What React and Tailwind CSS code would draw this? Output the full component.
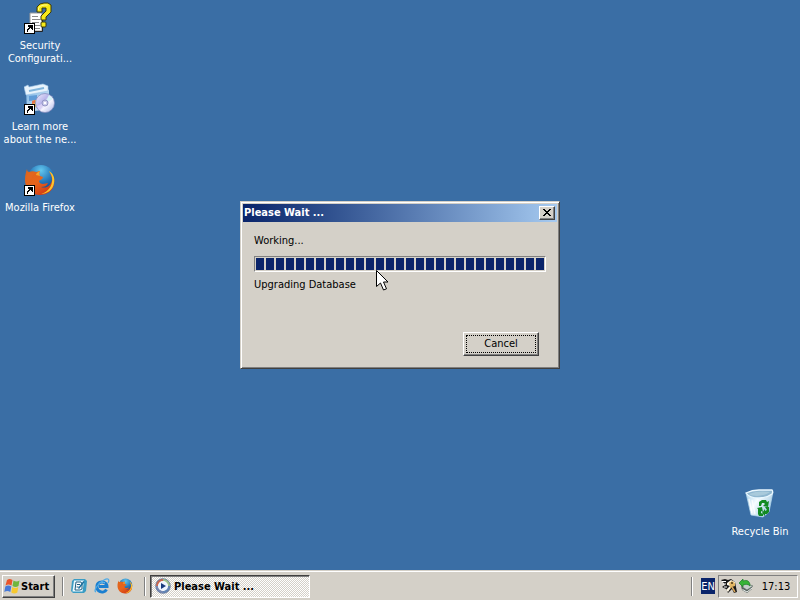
import React from "react";

const RAISED =
  "border border-t-white border-l-white border-r-[#404040] border-b-[#404040] bg-[#d4d0c8] shadow-[inset_-1px_-1px_0_#808080]";

function ShortcutArrow() {
  return (
    <g shapeRendering="crispEdges">
      <rect x="0" y="21" width="11" height="11" fill="#000" />
      <rect x="1" y="22" width="9" height="9" fill="#fff" />
      <path d="M4 23h5v5h-1v-1h-1v-1h-1v1h-1v1h-1v2h-1v-3h1v-1h1v-1h-1z" fill="#000" />
    </g>
  );
}

function SecurityIcon() {
  return (
    <svg width="32" height="32" viewBox="0 0 32 32" aria-hidden="true">
      <path d="M6 11h12v18H6z" fill="#fff" stroke="#9a9a9a" />
      <path d="M18.500 12v17.500H10" fill="none" stroke="#222" />
      <path d="M8 14.500h6M8 17.500h8M8 20.500h7M8 23.500h8M10 26.500h6" stroke="#8b8b8b" />
      <path
        d="M13 10V5l3-3 4-1h4l3 2v7l-3 3-2 2v3h-5v-4l3-3 2-2V6h-4v4z"
        fill="#f7ea18"
        stroke="#3b3909"
        strokeLinejoin="round"
      />
      <path d="M14.500 8V6l2-2 4-1h3" stroke="#fffa90" fill="none" />
      <rect x="17" y="20" width="5" height="5" rx="1" fill="#f7ea18" stroke="#3b3909" />
      <ShortcutArrow />
    </svg>
  );
}

function LearnIcon() {
  return (
    <svg width="32" height="32" viewBox="0 0 32 32" aria-hidden="true">
      <defs>
        <linearGradient id="boxFace" x1="0" y1="0" x2="1" y2="1">
          <stop offset="0" stopColor="#72aee2" />
          <stop offset="1" stopColor="#e9f5fd" />
        </linearGradient>
        <linearGradient id="disc" x1="0" y1="0" x2="1" y2="1">
          <stop offset="0" stopColor="#f3f1ff" />
          <stop offset=".4" stopColor="#b9b5ea" />
          <stop offset=".6" stopColor="#f6f4ff" />
          <stop offset="1" stopColor="#a7b3e4" />
        </linearGradient>
      </defs>
      <path d="M2 6l18-2 5 3v19L3 29z" fill="url(#boxFace)" />
      <path d="M0 4l4-2 1 2 14-3 5 2v5L2 12z" fill="#e7f3fc" stroke="#a2c8e8" strokeWidth=".6" />
      <path d="M5 8l15-3" stroke="#81b5dc" strokeWidth="2" />
      <path d="M5 13l8-1v5l-8 1z" fill="#5f9bd7" />
      <path d="M8 18l4-1v7l-4 1z" fill="#eec64a" />
      <path d="M8 18l3-1v3l-3 1z" fill="#e5744c" />
      <circle cx="21" cy="20" r="9.5" fill="url(#disc)" stroke="#7f86b9" strokeWidth=".7" />
      <path d="M21 20l4-8a9 9 0 0 1 4 4z" fill="#d5f1f7" />
      <path d="M21 20l-5 7a9 9 0 0 1-3-4z" fill="#d9d0f4" />
      <circle cx="21" cy="20" r="3" fill="#cac9eb" stroke="#9396c5" />
      <circle cx="21" cy="20" r="1.3" fill="#fff" />
      <ShortcutArrow />
    </svg>
  );
}

function FirefoxArt({ id }) {
  return (
    <>
      <defs>
        <radialGradient id={`${id}globe`} cx=".5" cy=".2" r=".8">
          <stop offset="0" stopColor="#63c7ee" />
          <stop offset=".55" stopColor="#2475b8" />
          <stop offset="1" stopColor="#173c7d" />
        </radialGradient>
        <linearGradient id={`${id}fox`} x1=".1" y1="0" x2=".8" y2="1">
          <stop offset="0" stopColor="#dc651c" />
          <stop offset=".5" stopColor="#e8641b" />
          <stop offset="1" stopColor="#ce3313" />
        </linearGradient>
      </defs>
      <circle cx="17" cy="14.5" r="13.5" fill={`url(#${id}globe)`} />
      <path
        d="M3 5c0 2 1 3 2 3 2-1 5-1 7 0l4-1c-1 2-1 3 0 5l3 1c0 2-3 3-4 4 0 2 2 3 4 3 2 0 3-1 5-1-1 3-4 4-7 4 5 2 10-1 11-7 0-3-1-6-3-8 5 3 6 8 5 12-1 7-7 11-14 11C8 31 1 25 1 16c0-5 1-8 2-11z"
        fill={`url(#${id}fox)`}
      />
      <path
        d="M25 7c5 3 6 8 5 12-1 7-7 11-13 11 6-2 10-6 11-12 1-5-1-8-3-11z"
        fill="#fbc52d"
      />
      <path d="M4 9c2 0 5-1 8 0-3 1-4 3-4 5-1 2-3 3-5 5 0-4 0-7 1-10z" fill="#e2661f" />
      <path d="M16 7c-1 2-1 3 0 5l-4-1c0-2 2-3 4-4z" fill="#f7a329" />
    </>
  );
}

function FirefoxIcon() {
  return (
    <svg width="32" height="32" viewBox="0 0 32 32" aria-hidden="true">
      <FirefoxArt id="desktop" />
      <ShortcutArrow />
    </svg>
  );
}

function RecycleIcon() {
  return (
    <svg width="32" height="32" viewBox="0 0 32 32" aria-hidden="true">
      <defs>
        <linearGradient id="bin" x1="0" y1="0" x2="1" y2=".6">
          <stop offset="0" stopColor="#a9d3ec" />
          <stop offset=".45" stopColor="#f6fcff" />
          <stop offset="1" stopColor="#9fc9e2" />
        </linearGradient>
      </defs>
      <path d="M2 5l13 5 14-6-4 20-6 5-12-2z" fill="url(#bin)" stroke="#b4d9ed" strokeWidth=".7" />
      <path d="M2 5c4-2 8-3 13-3l13 0c1 1 1 2 0 4-4 3-8 4-13 4-6 0-11-2-13-5z" fill="#8fb7d0" stroke="#eaf8ff" strokeWidth="1.3" />
      <path d="M5 6c7-3 14-3 21-2-4 3-14 6-21 2z" fill="#a9cadb" />
      <path d="M5 11l3 14M8 12l3 14" stroke="#fff" strokeWidth="1.3" opacity=".8" />
      <g fill="#128a22">
        <path d="M15 18v-4l3-2h4l1 2 2-1-1 6-5-1 2-2-1-1h-2l-1 3z" />
        <path d="M21 19l4 0v5l-2 2h-2v2l-3-3 3-4v2l2-1z" />
        <path d="M13 20l5-1 1 5-2-1v2l2 1v2h-4l-1-2v-5z" />
      </g>
    </svg>
  );
}

function DesktopIcon({ icon, lines }) {
  return (
    <button type="button" className="flex h-[81px] w-20 flex-col items-center gap-[5px] text-white">
      {icon}
      <span className="whitespace-nowrap text-center leading-[13px]">
        {lines.map((line) => (
          <span key={line} className="block">
            {line}
          </span>
        ))}
      </span>
    </button>
  );
}

function Dialog() {
  return (
    <section
      role="dialog"
      aria-labelledby="dialog-title"
      className="w-80 border border-t-[#d4d0c8] border-l-[#d4d0c8] border-r-[#404040] border-b-[#404040] bg-[#d4d0c8] shadow-[inset_1px_1px_0_#fff,inset_-1px_-1px_0_#808080]"
    >
      <div className="p-[2px]">
        <header className="flex h-[18px] items-center justify-between bg-linear-to-r from-[#0a246a] to-[#a6caf0] pr-[2px] pl-px text-white">
          <h1 id="dialog-title" className="font-bold">
            Please Wait ...
          </h1>
          <button
            type="button"
            aria-label="Close"
            className={`flex h-[14px] w-4 items-center justify-center text-black ${RAISED}`}
          >
            <svg width="8" height="7" viewBox="0 0 8 7" shapeRendering="crispEdges" aria-hidden="true">
              <path
                d="M0 0h2v1h1v1h2V1h1V0h2v1H7v1H6v1H5v1h1v1h1v1h1v1H6V6H5V5H3v1H2v1H0V6h1V5h1V4h1V3H2V2H1V1H0z"
                fill="currentColor"
              />
            </svg>
          </button>
        </header>
        <div className="flex flex-col px-[11px] pt-3 pb-[10px]">
          <p id="progress-label" className="leading-[14px]">
            Working...
          </p>
          <div
            role="progressbar"
            aria-labelledby="progress-label"
            aria-valuenow={100}
            className="mt-2 flex h-4 gap-[2px] border border-t-[#808080] border-l-[#808080] border-r-white border-b-white p-px"
          >
            {Array.from({ length: 29 }, (_, i) => (
              <span key={i} className="flex-1 bg-[#0a246a]" />
            ))}
          </div>
          <p className="mt-[6px] leading-[14px]">Upgrading Database</p>
          <button
            type="button"
            className={`mt-10 mr-[7px] h-6 w-[76px] self-end p-[2px] ${RAISED}`}
          >
            <span className="flex h-full items-center justify-center border border-dotted border-black">
              Cancel
            </span>
          </button>
        </div>
      </div>
    </section>
  );
}

function Cursor() {
  return (
    <svg
      className="absolute top-[270px] left-[376px]"
      width="13"
      height="22"
      viewBox="0 0 13 22"
      aria-hidden="true"
    >
      <path d="M.5.5v16l4-3.5 3 7 3-1.200-3-6.800h4.500z" fill="#fff" stroke="#000" />
    </svg>
  );
}

function WindowsFlag() {
  return (
    <svg width="16" height="16" viewBox="0 0 16 16" aria-hidden="true">
      <path d="M3 2c2-1.500 3-1.500 5.500 0L7.500 7.500C5 6 4 6 1.500 7.500z" fill="#e9552b" />
      <path d="M9.500 2.500c2 1.300 4 1.300 6 0l-1 5.500c-2 1.300-4 1.300-6 0z" fill="#6fb63d" />
      <path d="M1.300 8.500c2-1.500 4-1.500 6 0l-1 5.500c-2-1.500-4-1.500-6 0z" fill="#4679d8" />
      <path d="M8.300 9c2 1.300 4 1.300 6 0l-1 5.500c-2 1.300-4 1.300-6 0z" fill="#f7c92f" />
    </svg>
  );
}

function ShowDesktopIcon() {
  return (
    <svg width="16" height="16" viewBox="0 0 16 16" aria-hidden="true">
      <path d="M3 1h11l2 2-1 10-2 2H2l-2-2L1 3z" fill="#3a9cc4" />
      <path d="M3 2.500h10l-1.500 11H1.500z" fill="#eaf8fd" />
      <path d="M5 4h5l1 2v5l-2 1H4z" fill="#fff" stroke="#1d5d80" />
      <path d="M6 6.500h3M5.500 9h2" stroke="#1d5d80" />
      <path d="M7.500 10.500l5.500-7" stroke="#1b6f9d" strokeWidth="1.500" />
    </svg>
  );
}

function ExplorerIcon() {
  return (
    <svg width="16" height="16" viewBox="0 0 16 16" aria-hidden="true">
      <path
        d="M12.500 11.500C11 14 8 14.500 6 13.500 2 12 2 6 5.500 4.500 9 3 13 5 13 8.500H5"
        fill="none"
        stroke="#1b7fd0"
        strokeWidth="3"
      />
      <path d="M4.500 6C6 4 9 3.500 11 5" fill="none" stroke="#79c9f5" />
      <path d="M2 14c-3-1 2-9 8-12 4-2 6-1 4 3" fill="none" stroke="#4fabe6" strokeWidth="1.300" />
    </svg>
  );
}

function TaskIcon() {
  return (
    <svg width="16" height="16" viewBox="0 0 16 16" aria-hidden="true">
      <circle cx="8" cy="8" r="7" fill="#fff" stroke="#6c7c9d" strokeWidth="1.500" />
      <g fill="none" strokeWidth="2">
        <path d="M8 2a6 6 0 0 0-6 6" stroke="#ca674e" />
        <path d="M8 2a6 6 0 0 1 6 6" stroke="#9dc18c" />
        <path d="M14 8a6 6 0 0 1-6 6" stroke="#6285b5" />
        <path d="M2 8a6 6 0 0 0 6 6" stroke="#7487b3" />
      </g>
      <circle cx="8" cy="8" r="4.500" fill="#eef5ff" />
      <path d="M6 5l5 3-5 3z" fill="#193b7d" />
    </svg>
  );
}

function KeysIcon() {
  return (
    <svg width="16" height="16" viewBox="0 0 16 16" aria-hidden="true">
      <path d="M0 2l4-1 3 1 3-1 4 3 2 10-3 1-2-4-4 4-2-4-4-2 3-2-2-3z" fill="#171717" />
      <path d="M1 3.500h4M2 6h3M3 9h3" stroke="#fff" strokeWidth="1.200" />
      <path d="M6 5l4-3 4 2v3l-3 1-4 6-2-2 4-4-3-1z" fill="#fdf6e4" />
      <path d="M8 5l3-2 3 2v3l-3 1-2 2v-3z" fill="#e2b765" />
      <path d="M11 9l3 5" stroke="#d9a75c" strokeWidth="1.500" />
      <circle cx="11" cy="5" r="1" fill="#4a3516" />
    </svg>
  );
}

function HardwareIcon() {
  return (
    <svg width="16" height="16" viewBox="0 0 16 16" aria-hidden="true">
      <path d="M3 8l6 3 5-3v3l-5 4-5-3z" fill="#59645f" />
      <path d="M3 8l4-3 8 3-6 4z" fill="#c5ceca" stroke="#59645f" strokeWidth=".6" />
      <path d="M4.500 11.500l4.500 2.500 5-4" stroke="#eef2f0" fill="none" />
      <path d="M1 5l4-4v2c4-1.500 7 0 7 5-2-2-4-2-7-1v2z" fill="#36b436" stroke="#187a24" strokeWidth=".7" />
    </svg>
  );
}

function Divider() {
  return <span className="h-[19px] w-[2px] border-l border-[#808080] bg-white" />;
}

function Taskbar() {
  return (
    <footer className="flex h-[30px] items-center border-t border-[#d4d0c8] bg-[#d4d0c8] px-[2px] pt-px shadow-[inset_0_1px_0_#fff]">
      <button
        type="button"
        className={`flex h-[23px] w-[53px] shrink-0 items-center gap-px pl-px font-bold ${RAISED}`}
      >
        <WindowsFlag />
        Start
      </button>
      <nav aria-label="Quick launch" className="flex items-center pl-[7px]">
        <Divider />
        <div className="flex items-center gap-[7px] pl-[7px]">
          <button type="button" aria-label="Show desktop">
            <ShowDesktopIcon />
          </button>
          <button type="button" aria-label="Internet Explorer">
            <ExplorerIcon />
          </button>
          <button type="button" aria-label="Firefox">
            <svg width="16" height="16" viewBox="0 0 32 32" aria-hidden="true">
              <FirefoxArt id="launch" />
            </svg>
          </button>
        </div>
      </nav>
      <div className="flex flex-1 items-center gap-1 pl-[11px]">
        <Divider />
        <button
          type="button"
          className="flex h-[23px] w-40 items-center gap-[3px] border border-t-[#404040] border-l-[#404040] border-r-white border-b-white bg-[repeating-conic-gradient(#fff_0_25%,#d4d0c8_0_50%)] bg-size-[2px_2px] pl-1 font-bold shadow-[inset_1px_1px_0_#808080]"
        >
          <TaskIcon />
          Please Wait ...
        </button>
      </div>
      <Divider />
      <span className="mr-[3px] ml-2 flex h-4 w-[14px] items-center justify-center overflow-hidden bg-[#0a246a] text-white">
        EN
      </span>
      <div className="flex h-[23px] w-20 items-center gap-px border border-t-[#808080] border-l-[#808080] border-r-white border-b-white pl-[2px]">
        <KeysIcon />
        <HardwareIcon />
        <time className="flex-1 text-center">17:13</time>
      </div>
    </footer>
  );
}

export default function App() {
  return (
    <div className="flex min-h-screen flex-col overflow-hidden bg-[#3a6ea5] font-['DejaVu_Sans_Condensed','DejaVu_Sans',sans-serif] text-[11px] leading-[13px] text-black">
      <main className="relative flex flex-1 items-center justify-between pb-px">
        <div className="flex flex-col self-stretch pt-[2px]">
          <DesktopIcon icon={<SecurityIcon />} lines={["Security", "Configurati..."]} />
          <DesktopIcon icon={<LearnIcon />} lines={["Learn more", "about the ne..."]} />
          <DesktopIcon icon={<FirefoxIcon />} lines={["Mozilla Firefox"]} />
        </div>
        <Dialog />
        <div className="flex flex-col self-end">
          <DesktopIcon icon={<RecycleIcon />} lines={["Recycle Bin"]} />
        </div>
        <Cursor />
      </main>
      <Taskbar />
    </div>
  );
}
